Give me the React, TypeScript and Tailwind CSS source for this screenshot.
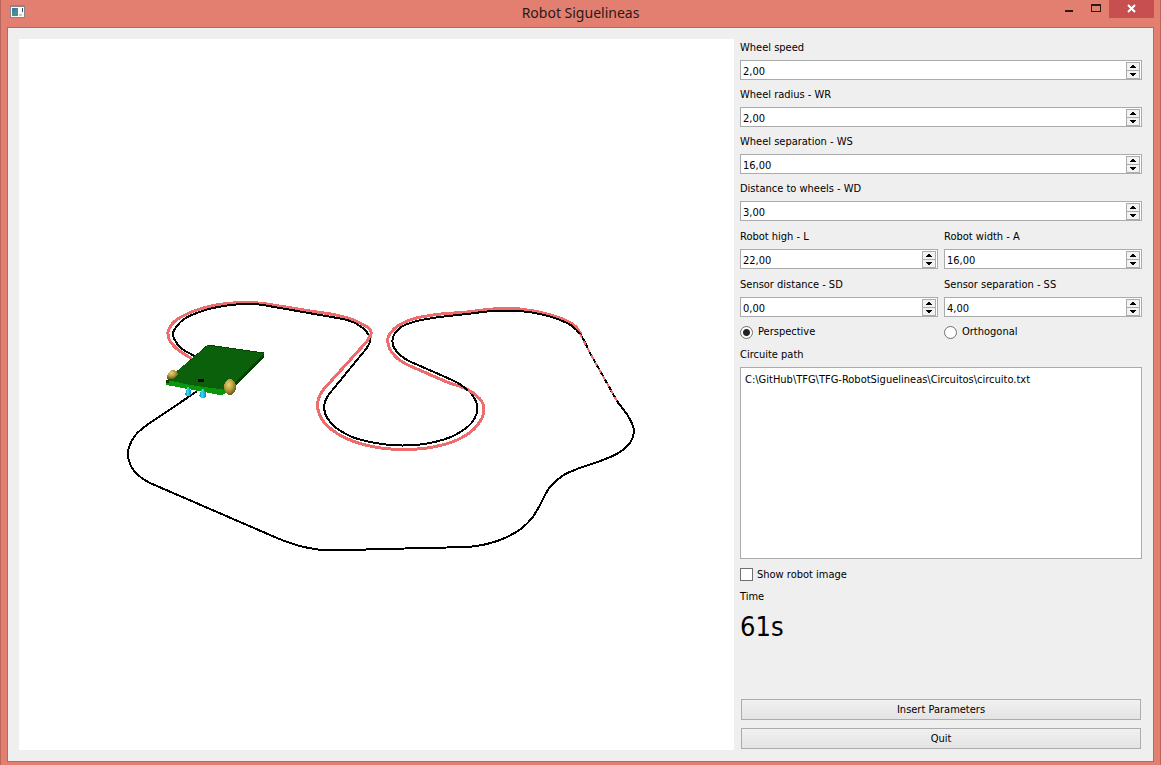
import { useId, useState } from "react";

type Point = [number, number];

const track: Point[] = [
  [196, 357], [178, 345], [173, 334], [181, 321.5], [201, 311.5], [227, 305.5], [245, 304], [263, 305], [303, 312],
  [343, 319], [360, 326], [368, 334], [370, 341], [366, 349], [330, 393], [325, 402], [325, 413], [333, 425],
  [350, 436], [375, 443], [403, 445.5], [430, 443], [455, 435], [473, 421], [477.5, 408],
  [473, 396], [461, 385], [443, 376], [410, 361.5], [398, 353], [393, 345], [393, 337], [400, 328],
  [415, 321.5], [433, 318], [467, 314], [493, 311], [520, 311], [540, 314], [560, 320], [572, 326], [580, 334],
  [590, 353], [617, 401], [628, 416], [634, 432], [630, 443], [620, 452], [603, 460], [577, 469],
  [563, 475.5], [550, 487], [540, 505], [532, 518], [522, 528], [507, 537], [487, 544], [467, 547], [427, 548],
  [383, 549], [333, 550.5], [300, 546], [277, 538], [150, 483], [138, 475], [130, 464], [128, 453],
  [134, 437], [147, 425], [187, 398], [197, 391],
];

const trail: Point[] = [
  [192, 359], [175, 347], [169, 339], [168, 332], [173, 323], [187, 314], [207, 307], [227, 303.5], [248, 302.5],
  [267, 304], [310, 311], [340, 316], [360, 323], [371, 332], [370, 338], [323, 390], [317.5, 405],
  [323, 421], [338, 434], [360, 443.5], [385, 448.5], [403, 449.5], [433, 447], [457, 440], [474, 429], [483, 415],
  [483, 404], [470, 391], [447, 382], [410, 366], [397, 358], [389, 347], [388, 338], [394, 329],
  [410, 320], [433, 315], [467, 312], [493, 309], [520, 309], [547, 314], [567, 321], [576, 327], [581, 334],
];

/** Unit tangent at point i, weighted so that the shorter neighbouring segment leads. */
function tangent(points: Point[], i: number): Point {
  const a = points[Math.max(i - 1, 0)];
  const b = points[i];
  const c = points[Math.min(i + 1, points.length - 1)];
  const l1 = Math.hypot(b[0] - a[0], b[1] - a[1]);
  const l2 = Math.hypot(c[0] - b[0], c[1] - b[1]);
  const w1 = l1 ? (l2 || 1) / l1 : 0;
  const w2 = l2 ? (l1 || 1) / l2 : 0;
  const x = (b[0] - a[0]) * w1 + (c[0] - b[0]) * w2;
  const y = (b[1] - a[1]) * w1 + (c[1] - b[1]) * w2;
  const n = Math.hypot(x, y) || 1;
  return [x / n, y / n];
}

/** Smooth curve through the given points, as SVG path data. */
function smooth(points: Point[]) {
  let d = `M${points[0][0]} ${points[0][1]}`;
  for (let i = 0; i < points.length - 1; i++) {
    const b = points[i];
    const c = points[i + 1];
    const k = Math.hypot(c[0] - b[0], c[1] - b[1]) / 3;
    const t = tangent(points, i);
    const u = tangent(points, i + 1);
    d += `C${b[0] + t[0] * k} ${b[1] + t[1] * k} ${c[0] - u[0] * k} ${c[1] - u[1] * k} ${c[0]} ${c[1]}`;
  }
  return d;
}

/** Same curve, with long stretches pinned so that they stay straight. */
function withStraights(points: Point[]) {
  const out: Point[] = [];
  points.forEach((p, i) => {
    out.push(p);
    const q = points[i + 1];
    if (!q) return;
    const len = Math.hypot(q[0] - p[0], q[1] - p[1]);
    if (len > 36) {
      const f = 6 / len;
      out.push([p[0] + (q[0] - p[0]) * f, p[1] + (q[1] - p[1]) * f]);
      out.push([q[0] - (q[0] - p[0]) * f, q[1] - (q[1] - p[1]) * f]);
    }
  });
  return out;
}

function Scene() {
  return (
    <svg viewBox="19 39 715 711" className="block h-full w-full" role="img" aria-label="Circuit">
      <defs>
        <radialGradient id="wheel" cx="0.4" cy="0.35" r="0.65">
          <stop offset="0" stopColor="#e8d67c" />
          <stop offset="0.5" stopColor="#bda142" />
          <stop offset="1" stopColor="#6f5a1c" />
        </radialGradient>
        <linearGradient id="drop" x1="0" x2="1" y1="0" y2="0">
          <stop offset="0" stopColor="#0b8fb8" />
          <stop offset="0.4" stopColor="#35dcff" />
          <stop offset="1" stopColor="#0a86b0" />
        </linearGradient>
      </defs>
      <g fill="none" shapeRendering="crispEdges">
        <path d={smooth(withStraights(trail))} stroke="#ee6c6c" strokeWidth="3" />
        <path d={smooth(withStraights(track))} stroke="#000" strokeWidth="2" />
        <path d="M371 334L366 343M468 390L475 394" stroke="#ee6c6c" strokeWidth="3" />
        <path d="M580 334L590 353L617 401" stroke="#ee6c6c" strokeWidth="2" strokeDasharray="4 4" />
      </g>
      <g shapeRendering="crispEdges">
        <path d="M264 353V357L228 394L226 388Z" fill="#043f04" />
        <path d="M208 345L178 371" fill="none" stroke="#032a03" strokeWidth="1" />
        <path d="M208 345L264 353L227 391L166 381L178 370Z" fill="#0b610b" />
        <path d="M208 345L264 353" stroke="#064406" strokeWidth="1" />
        <path d="M166 380L172 381L190 385L227 390L225 394L220 395L172 386L166 385Z" fill="#0a960c" />
        <path d="M166 380H169V383H166Z" fill="#043f04" />
        <rect x="198" y="379" width="6" height="3" fill="#000" />
        <path d="M178 374Q176 369 172 370Q167 372 167 379L174 379Z" fill="url(#wheel)" />
        <ellipse cx="230" cy="387" rx="6" ry="8" fill="url(#wheel)" />
        <path d="M188 386L191 391Q192 396 188 396Q184 396 186 391Z" fill="url(#drop)" />
        <path d="M203 388L206 393Q207 398 203 398Q198 398 200 393Z" fill="url(#drop)" />
      </g>
    </svg>
  );
}

const label = "block h-[14px] leading-[15px] whitespace-nowrap";

function SpinField({ text, initial }: { text: string; initial: string }) {
  const id = useId();
  const [value, setValue] = useState(initial);
  const step = (delta: number) =>
    setValue((v) => (parseFloat(v.replace(",", ".") || "0") + delta).toFixed(2).replace(".", ","));
  const arrow =
    "flex h-[7px] w-3 items-center justify-center bg-[#f2f2f2] outline outline-1 outline-[#acacac]";
  return (
    <div className="flex min-w-0 flex-1 flex-col gap-[6px]">
      <label htmlFor={id} className={label}>
        {text}
      </label>
      <div className="flex h-5 border border-[#a9abad] bg-white">
        <input
          id={id}
          type="text"
          inputMode="decimal"
          value={value}
          onChange={(e) => setValue(e.target.value)}
          className="min-w-0 flex-1 bg-transparent pt-[3px] pl-[2px] leading-[15px] outline-none"
        />
        <div className="mr-[2px] flex flex-col justify-center gap-px">
          <button type="button" aria-label={`Increase ${text}`} className={arrow} onClick={() => step(1)}>
            <svg width="6" height="3" viewBox="0 0 6 3" shapeRendering="crispEdges">
              <path d="M2 0H4V1H5V2H6V3H0V2H1V1H2Z" />
            </svg>
          </button>
          <button type="button" aria-label={`Decrease ${text}`} className={arrow} onClick={() => step(-1)}>
            <svg width="6" height="3" viewBox="0 0 6 3" shapeRendering="crispEdges">
              <path d="M0 0H6V1H5V2H4V3H2V2H1V1H0Z" />
            </svg>
          </button>
        </div>
      </div>
    </div>
  );
}

function Projection({ text, checked }: { text: string; checked?: boolean }) {
  return (
    <label className="flex h-[14px] flex-1 items-center gap-[5px] leading-[14px]">
      <input
        type="radio"
        name="projection"
        defaultChecked={checked}
        className="h-[13px] w-[13px] appearance-none rounded-full border border-[#707070] bg-white checked:bg-[radial-gradient(circle,#222_3px,#fff_4px)]"
      />
      {text}
    </label>
  );
}

const pushButton =
  "mx-px h-[21px] border border-[#acacac] bg-linear-to-b from-[#f0f0f0] to-[#e4e4e4] leading-5";

export default function App() {
  return (
    <div className="flex min-h-screen flex-col border-x border-[#b9655a] bg-[#e27f70] px-[6px] pb-[3px] font-['DejaVu_Sans_Condensed','DejaVu_Sans',sans-serif] text-[11px] text-black">
      <header className="grid h-[27px] grid-cols-[1fr_auto_1fr] items-start">
        <svg className="mt-[5px] ml-[3px]" width="15" height="13" viewBox="0 0 15 13" aria-hidden="true">
          <rect width="15" height="13" fill="#8d8583" />
          <rect x="1" y="2" width="13" height="10" fill="#fafafa" />
          <rect x="2" y="3" width="6" height="8" fill="#4d8f86" />
          <path d="M2 3H8L2 8Z" fill="#4478a0" />
          <rect x="12" y="3" width="1" height="4" fill="#35506c" />
          <rect x="9" y="9" width="3" height="2" fill="#c8ccd0" />
        </svg>
        <h1 className="font-['Noto_Sans','Open_Sans',sans-serif] text-[14px] leading-[26px] text-[#2b1a18]">
          Robot Siguelineas
        </h1>
        <div className="flex justify-end">
          <button type="button" aria-label="Minimize" className="flex h-[18px] w-[27px] justify-center">
            <svg width="9" height="18" viewBox="0 0 9 18" aria-hidden="true">
              <rect x="1" y="10" width="8" height="2" fill="#2b1a18" />
            </svg>
          </button>
          <button type="button" aria-label="Maximize" className="flex h-[18px] w-[27px] justify-center">
            <svg width="11" height="18" viewBox="0 0 11 18" shapeRendering="crispEdges" aria-hidden="true">
              <path d="M1 4H11V12H1ZM2 6V11H10V6Z" fill="#2b1a18" fillRule="evenodd" />
            </svg>
          </button>
          <button type="button" aria-label="Close" className="flex h-[18px] w-[45px] justify-center bg-[#c84f50]">
            <svg width="9" height="18" viewBox="0 0 9 18" aria-hidden="true">
              <path d="M1 5L8 12M8 5L1 12" stroke="#fff" strokeWidth="2" />
            </svg>
          </button>
        </div>
      </header>
      <main className="flex flex-1 gap-[6px] border border-[#bd6558] bg-[#efefef] p-[11px]">
        <section className="min-w-0 flex-1 bg-white">
          <Scene />
        </section>
        <form className="flex w-[402px] shrink-0 flex-col py-px" onSubmit={(e) => e.preventDefault()}>
          <div className="flex flex-col gap-[7px]">
            <SpinField text="Wheel speed" initial="2,00" />
            <SpinField text="Wheel radius - WR" initial="2,00" />
            <SpinField text="Wheel separation - WS" initial="16,00" />
            <SpinField text="Distance to wheels - WD" initial="3,00" />
          </div>
          <div className="mt-2 flex flex-col gap-2">
            <div className="flex gap-[6px]">
              <SpinField text="Robot high - L" initial="22,00" />
              <SpinField text="Robot width - A" initial="16,00" />
            </div>
            <div className="flex gap-[6px]">
              <SpinField text="Sensor distance - SD" initial="0,00" />
              <SpinField text="Sensor separation - SS" initial="4,00" />
            </div>
            <div className="flex gap-[6px]">
              <Projection text="Perspective" checked />
              <Projection text="Orthogonal" />
            </div>
          </div>
          <label htmlFor="circuit" className={`${label} mt-2 mb-[6px]`}>
            Circuite path
          </label>
          <textarea
            id="circuit"
            defaultValue={"C:\\GitHub\\TFG\\TFG-RobotSiguelineas\\Circuitos\\circuito.txt"}
            className="h-48 resize-none border border-[#a9abad] bg-white px-1 py-[5px] leading-[14px] outline-none"
          />
          <label className="mt-2 flex h-[14px] items-center gap-1 self-start leading-[15px]">
            <input type="checkbox" className="h-[13px] w-[13px] appearance-none border border-[#707070] bg-white checked:bg-[#444]" />
            Show robot image
          </label>
          <p className={`${label} mt-2`}>Time</p>
          <output className="mt-[6px] block text-[27px] leading-9">61s</output>
          <div className="mt-auto flex flex-col gap-2">
            <button type="submit" className={pushButton}>
              Insert Parameters
            </button>
            <button type="button" className={pushButton}>
              Quit
            </button>
          </div>
        </form>
      </main>
    </div>
  );
}
